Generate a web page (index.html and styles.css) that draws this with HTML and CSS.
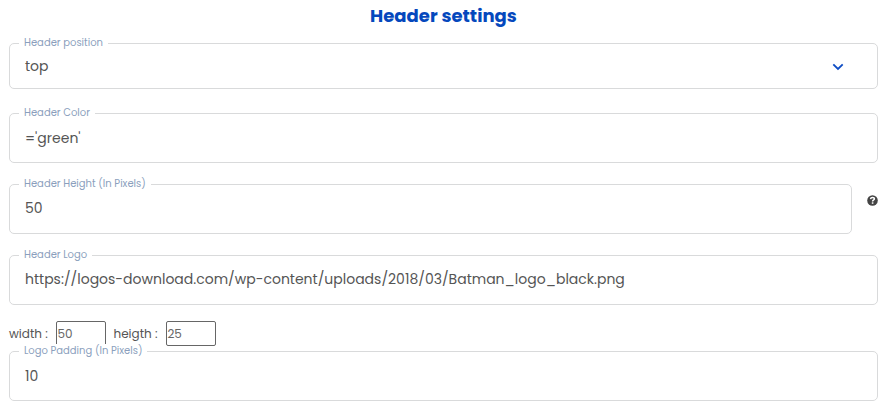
FILE: index.html
```html
<!DOCTYPE html>
<html lang="en">
<head>
  <meta charset="utf-8">
  <meta name="viewport" content="width=device-width, initial-scale=1">
  <title>Header settings</title>
  <link rel="stylesheet" href="styles.css">
</head>
<body>
  <div class="settings">
    <h1>Header settings</h1>

    <div class="field select-field">
      <label>Header position</label>
      <span class="value">top</span>
      <svg class="chevron" width="12" height="8" viewBox="0 0 12 8">
        <path d="M1.300 1.300L6 6l4.700-4.700" fill="none" stroke="#0d4cc4" stroke-width="1.800"/>
      </svg>
    </div>

    <div class="field">
      <label>Header Color</label>
      <span class="value">='green'</span>
    </div>

    <div class="field-row">
      <div class="field raised">
        <label>Header Height (In Pixels)</label>
        <span class="value">50</span>
      </div>
      <svg class="help" width="11" height="11" viewBox="0 0 11 11">
        <circle cx="5.500" cy="5.500" r="5.300" fill="#444"/>
        <path d="M3.500 4.200C3.700 3 4.400 2.500 5.400 2.500c1.200 0 2 .5 2 1.400C7.400 5 5.600 5 5.600 6.500" fill="none" stroke="#fff" stroke-width="1.500"/>
        <path d="M4.800 7.300h1.600v1.500H4.800z" fill="#fff"/>
      </svg>
    </div>

    <div class="field raised">
      <label>Header Logo</label>
      <span class="value">https://logos-download.com/wp-content/uploads/2018/03/Batman_logo_black.png</span>
    </div>

    <div class="size-row">
      <span class="size-name name-width">width :</span>
      <input class="size-input" type="text" value="50">
      <span class="size-name name-height">heigth :</span>
      <input class="size-input" type="text" value="25">
    </div>

    <div class="field padding-field">
      <label>Logo Padding (In Pixels)</label>
      <span class="value">10</span>
    </div>
  </div>
</body>
</html>
```

FILE: styles.css
```css
* {
  box-sizing: border-box;
}
body {
  margin: 0;
  background: #fff;
  color: #555;
  font-family: Poppins, Inter, "Open Sans", sans-serif;
}
.settings {
  display: flex;
  flex-direction: column;
  padding: 0 14px 0 9px;
}
h1 {
  margin: 4px 0 15px;
  height: 24px;
  line-height: 24px;
  font-size: 18px;
  font-weight: 700;
  text-align: center;
  color: #0548bd;
}
.field {
  position: relative;
  display: flex;
  align-items: center;
  height: 50px;
  margin-bottom: 21px;
  padding: 0 15px;
  border: 1px solid #d9dadb;
  border-radius: 5px;
}
.field label {
  position: absolute;
  top: -9px;
  left: 9px;
  height: 16px;
  padding: 0 5px;
  background: #fff;
  color: #8b9fbd;
  font-size: 10px;
  line-height: 15px;
  white-space: nowrap;
}
.value {
  font-size: 14px;
  line-height: 20px;
  white-space: nowrap;
}
.raised {
  padding-bottom: 2px;
}
.select-field {
  height: 46px;
  margin-bottom: 24px;
  justify-content: space-between;
}
.chevron {
  margin: 2px 18px 0 0;
}
.field-row {
  display: flex;
}
.field-row .field {
  flex: 1;
}
.help {
  margin: 11px 0 0 15px;
}
.size-row {
  display: flex;
  align-items: center;
  height: 25px;
  margin: -5px 0 5px;
}
.size-name {
  font-size: 12px;
  white-space: nowrap;
}
.name-width {
  width: 47px;
}
.name-height {
  width: 52.500px;
  margin-left: 7.500px;
}
.size-input {
  width: 50px;
  height: 25px;
  padding: 0 0.400px;
  border: 1px solid #666;
  border-radius: 2px;
  background: #fff;
  color: #666;
  font-family: inherit;
  font-size: 12px;
}
.padding-field {
  margin-bottom: 0;
}
.padding-field label {
  top: -8px;
  line-height: 14px;
}
```
